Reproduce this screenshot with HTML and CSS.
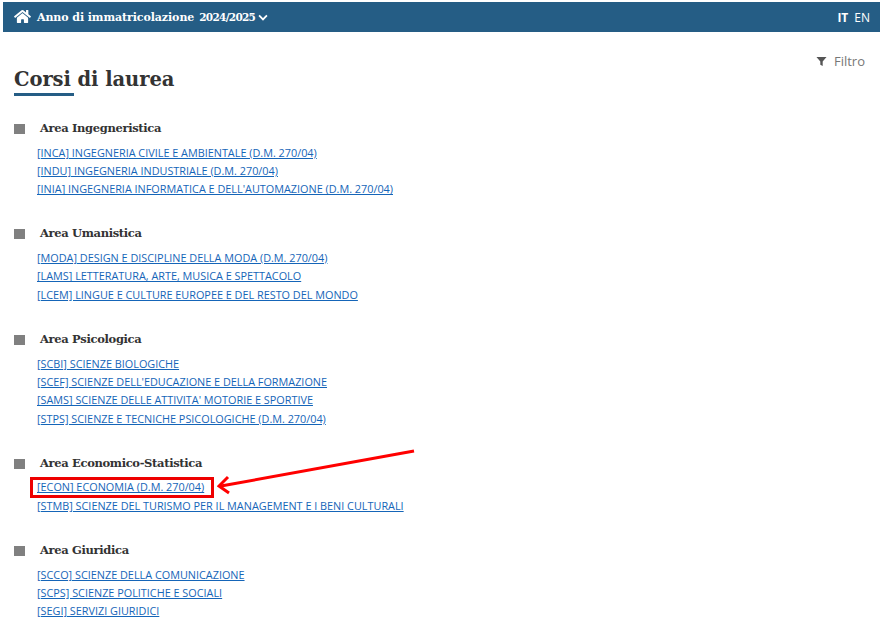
FILE: index.html
```html
<!DOCTYPE html>
<html lang="it">
<head>
<meta charset="utf-8">
<title>Corsi di laurea</title>
<link rel="stylesheet" href="styles.css">
</head>
<body>
<nav class="topbar">
  <div class="year">
    <svg class="home" viewBox="0 0 576 512" width="17" height="15"><path fill="currentColor" d="M280.4 148.3 96 300.1V464a16 16 0 0 0 16 16l112.1-.3a16 16 0 0 0 15.9-16V368a16 16 0 0 1 16-16h64a16 16 0 0 1 16 16v95.6a16 16 0 0 0 16 16l112 .4a16 16 0 0 0 16-16V300L295.7 148.300a12.200 12.200 0 0 0-15.300 0zM571.600 251.500 488 182.600V44.100a12 12 0 0 0-12-12h-56a12 12 0 0 0-12 12v72.600L318.500 43a48 48 0 0 0-61 0L4.300 251.500a12 12 0 0 0-1.600 16.900l25.500 31A12 12 0 0 0 45.200 301l235.200-193.700a12.200 12.200 0 0 1 15.300 0L530.900 301a12 12 0 0 0 16.900-1.600l25.500-31a12 12 0 0 0-1.700-16.900z"/></svg>
    <span class="year-label">Anno di immatricolazione</span>
    <span class="year-value">2024/2025</span>
    <svg class="chev" viewBox="0 0 12 8" width="10" height="7"><path d="M1.300 1.500 6 6.200l4.700-4.700" fill="none" stroke="currentColor" stroke-width="2.200"/></svg>
  </div>
  <div class="langs"><b>IT</b><span>EN</span></div>
</nav>
<main class="content">
  <div class="filter">
    <svg viewBox="0 0 12 12" width="11" height="11"><path fill="#555" d="M.5 1h11L7.300 6v5L4.700 9.500V6z"/></svg>
    <span>Filtro</span>
  </div>
  <h1 class="title">Corsi di laurea</h1>

  <section class="area">
    <h2 class="area-name">Area Ingegneristica</h2>
    <ul class="courses">
      <li><a href="#">[INCA] INGEGNERIA CIVILE E AMBIENTALE (D.M. 270/04)</a></li>
      <li><a href="#">[INDU] INGEGNERIA INDUSTRIALE (D.M. 270/04)</a></li>
      <li><a href="#">[INIA] INGEGNERIA INFORMATICA E DELL'AUTOMAZIONE (D.M. 270/04)</a></li>
    </ul>
  </section>
  <section class="area">
    <h2 class="area-name">Area Umanistica</h2>
    <ul class="courses">
      <li><a href="#">[MODA] DESIGN E DISCIPLINE DELLA MODA (D.M. 270/04)</a></li>
      <li><a href="#">[LAMS] LETTERATURA, ARTE, MUSICA E SPETTACOLO</a></li>
      <li><a href="#">[LCEM] LINGUE E CULTURE EUROPEE E DEL RESTO DEL MONDO</a></li>
    </ul>
  </section>
  <section class="area">
    <h2 class="area-name">Area Psicologica</h2>
    <ul class="courses">
      <li><a href="#">[SCBI] SCIENZE BIOLOGICHE</a></li>
      <li><a href="#">[SCEF] SCIENZE DELL'EDUCAZIONE E DELLA FORMAZIONE</a></li>
      <li><a href="#">[SAMS] SCIENZE DELLE ATTIVITA' MOTORIE E SPORTIVE</a></li>
      <li><a href="#">[STPS] SCIENZE E TECNICHE PSICOLOGICHE (D.M. 270/04)</a></li>
    </ul>
  </section>
  <section class="area">
    <h2 class="area-name">Area Economico-Statistica</h2>
    <ul class="courses">
      <li><a href="#">[ECON] ECONOMIA (D.M. 270/04)</a></li>
      <li><a href="#">[STMB] SCIENZE DEL TURISMO PER IL MANAGEMENT E I BENI CULTURALI</a></li>
    </ul>
  </section>
  <section class="area">
    <h2 class="area-name">Area Giuridica</h2>
    <ul class="courses">
      <li><a href="#">[SCCO] SCIENZE DELLA COMUNICAZIONE</a></li>
      <li><a href="#">[SCPS] SCIENZE POLITICHE E SOCIALI</a></li>
      <li><a href="#">[SEGI] SERVIZI GIURIDICI</a></li>
    </ul>
  </section>
</main>
<div class="callout-box"></div>
<svg class="callout-arrow" viewBox="0 0 200 50" width="200" height="50"><path d="M197 2 4 37" stroke="#f00" stroke-width="3" fill="none"/><path d="M11 28 2 37l10 7" stroke="#f00" stroke-width="3" fill="none"/></svg>
</body>
</html>
```
FILE: styles.css
```css
html, body { margin: 0; padding: 0; background: #fff; }
body { width: 882px; height: 621px; overflow: hidden; position: relative; font-family: "Open Sans", sans-serif; color: #333; }
.topbar { margin: 2px 2px 0 3px; height: 30px; background: #255d85; color: #fff; display: flex; justify-content: space-between; align-items: center; padding: 0 10px 0 11px; }
.year { display: flex; align-items: center; font-family: "DejaVu Serif", serif; font-weight: 700; font-size: 11px; }
.home { margin-right: 6px; margin-top: -2px; }
.year-label { margin-right: 5px; letter-spacing: -0.08px; }
.year-value { font-size: 10.500px; letter-spacing: -0.7px; }
.chev { margin-left: 3px; }
.langs { display: flex; gap: 6px; font-size: 12px; }
.content { padding: 0 15px 0 14px; position: relative; }
.filter { position: absolute; right: 17px; top: 21px; display: flex; align-items: center; gap: 7px; font-size: 13px; color: #777; line-height: 16px; }
.title { margin: 0; padding-top: 36px; height: 28px; font-family: "DejaVu Serif", serif; font-weight: 700; font-size: 19.500px; line-height: 24px; letter-spacing: -0.07px; color: #333; position: relative; }
.title::after { content: ""; position: absolute; left: 0; bottom: 0; width: 60px; height: 3px; background: #255d85; }
.area { padding-bottom: 2.900px; }
.area-name { margin: 0; padding: 23px 0 0 26px; height: 18px; font-family: "DejaVu Serif", serif; font-size: 11.500px; line-height: 18px; font-weight: 700; letter-spacing: -0.34px; color: #333; position: relative; }
.area-name::before { content: ""; position: absolute; left: 0; top: 28px; width: 11px; height: 10px; background: #808080; }
.courses { list-style: none; margin: 6.700px 0 0; padding: 0 0 0 23px; }
.courses li { height: 18.300px; line-height: 18.300px; font-size: 10.850px; white-space: nowrap; }
.courses a { color: #1565b8; text-decoration: underline; }
.callout-box { position: absolute; left: 30px; top: 477px; width: 178px; height: 15px; border: 3px solid #e00; }
.callout-arrow { position: absolute; left: 217px; top: 449px; }
```
